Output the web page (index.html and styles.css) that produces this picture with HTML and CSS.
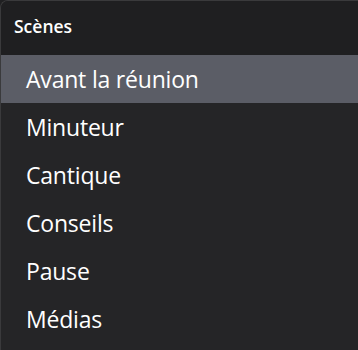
FILE: index.html
```html
<!DOCTYPE html>
<html lang="fr">
<head>
  <meta charset="UTF-8" />
  <meta name="viewport" content="width=device-width, initial-scale=1.0"/>
  <title>Scènes</title>
  <link rel="stylesheet" href="styles.css">
</head>
<body>
  <div class="panel">
    <div class="panel-header">Scènes</div>
    <ul class="scene-list">
      <li class="scene active">Avant la réunion</li>
      <li class="scene">Minuteur</li>
      <li class="scene">Cantique</li>
      <li class="scene">Conseils</li>
      <li class="scene">Pause</li>
      <li class="scene">Médias</li>
    </ul>
  </div>
</body>
</html>
```

FILE: styles.css
```css
body {
  margin: 0;
  background: #202022;
  font-family: "Open Sans", "Noto Sans", sans-serif;
  color: #ffffff;
  height: 100vh;
  overflow: hidden;
}

.panel {
  height: 100%;
  background: #252527;
  border-left: 1px solid #3a3a3c;
  border-top: 1px solid #3a3a3c;
  border-top-left-radius: 8px;
  box-sizing: border-box;
}

.panel-header {
  height: 54px;
  display: flex;
  align-items: center;
  padding: 0 0 4px 13px;
  box-sizing: border-box;
  background: #1f1f21;
  font-size: 17.5px;
  font-weight: 600;
  border-top-left-radius: 7px;
}

.scene-list {
  list-style: none;
  margin: 0;
  padding: 0;
}

.scene {
  height: 48px;
  display: flex;
  align-items: center;
  padding-left: 25px;
  font-size: 23px;
  letter-spacing: -0.2px;
}

.scene.active {
  background: #5b5d66;
}
```
